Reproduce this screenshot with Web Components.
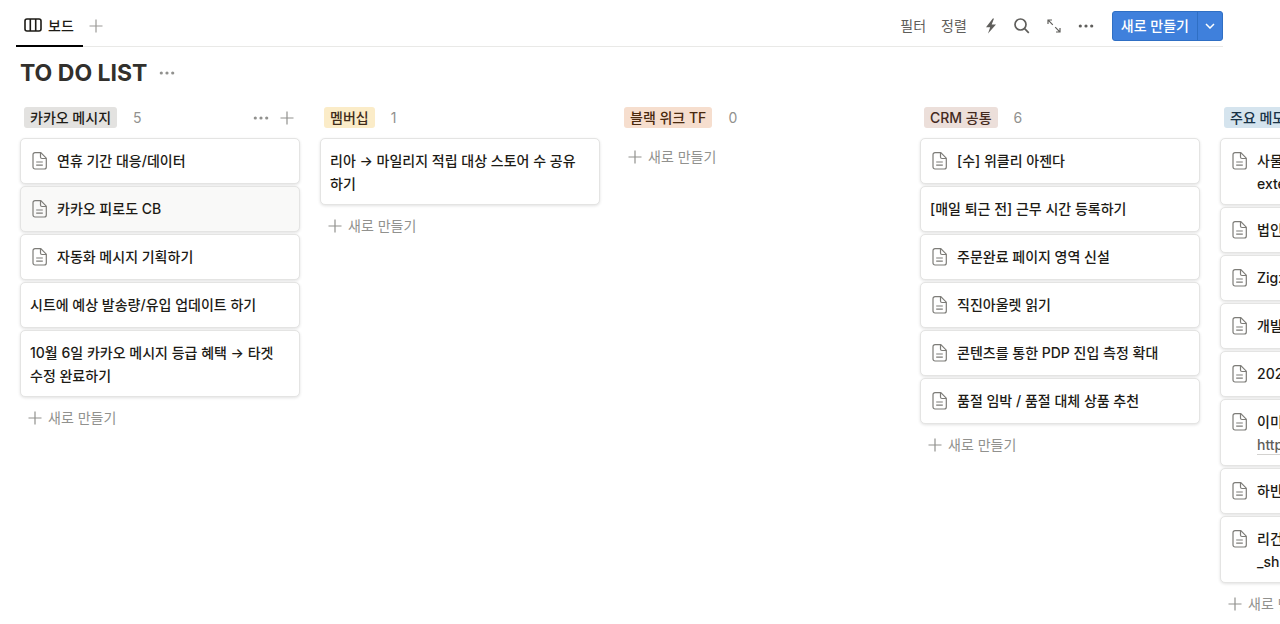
<!DOCTYPE html>
<html lang="ko">
<head>
<meta charset="utf-8">
<meta name="viewport" content="width=device-width, initial-scale=1">
<title>TO DO LIST</title>
<style>
    body{
        margin: 0;
        background: #fff;
        color: #1d1b16;
        font: 14px/23px Inter, "Noto Sans CJK KR", sans-serif;
        overflow-x: hidden;
    }
</style>
</head>
<body>

<todo-board>
    <board-toolbar slot="toolbar"></board-toolbar>
    <board-title slot="title">TO DO LIST</board-title>

    <board-column count="5" color="#e3e2e0" actions>
        <span slot="label">카카오 메시지</span>
        <board-card page>연휴 기간 대응/데이터</board-card>
        <board-card page active>카카오 피로도 CB</board-card>
        <board-card page>자동화 메시지 기획하기</board-card>
        <board-card>시트에 예상 발송량/유입 업데이트 하기</board-card>
        <board-card>10월 6일 카카오 메시지 등급 혜택 → 타겟 수정 완료하기</board-card>
    </board-column>

    <board-column count="1" color="#fbecc8" ink="#402c1b">
        <span slot="label">멤버십</span>
        <board-card>리아 → 마일리지 적립 대상 스토어 수 공유<br>하기</board-card>
    </board-column>

    <board-column count="0" color="#f6dece" ink="#49290e">
        <span slot="label">블랙 위크 TF</span>
    </board-column>

    <board-column count="6" color="#ecdfda" ink="#442a1e">
        <span slot="label">CRM 공통</span>
        <board-card page>[수] 위클리 아젠다</board-card>
        <board-card>[매일 퇴근 전] 근무 시간 등록하기</board-card>
        <board-card page>주문완료 페이지 영역 신설</board-card>
        <board-card page>직진아울렛 읽기</board-card>
        <board-card page>콘텐츠를 통한 PDP 진입 측정 확대</board-card>
        <board-card page>품절 임박 / 품절 대체 상품 추천</board-card>
    </board-column>

    <board-column color="#d5e4ee" ink="#183347">
        <span slot="label">주요 메모</span>
        <board-card page>사물<br>exte</board-card>
        <board-card page>법인</board-card>
        <board-card page>Zigz</board-card>
        <board-card page>개발</board-card>
        <board-card page>202</board-card>
        <board-card page>이미<br><a href="#">http</a></board-card>
        <board-card page>하반</board-card>
        <board-card page>리건<br>_sh</board-card>
    </board-column>
</todo-board>

<script>
const icons = {
    board: '<rect x="1" y="2" width="16" height="12" rx="2"/><path d="M6.3 2v12M11.7 2v12"/>',
    plus: '<path d="M7 .5v13M.5 7h13"/>',
    dots: '<g fill="currentColor" stroke="none"><circle cx="2.3" cy="3" r="1.6"/><circle cx="8" cy="3" r="1.6"/><circle cx="13.7" cy="3" r="1.6"/></g>',
    page: '<path d="M3 .7h5.8L14.3 6.2V15a2 2 0 0 1-2 2H3a2 2 0 0 1-2-2V2.7a2 2 0 0 1 2-2z"/><path d="M8.5 .9V5A1.5 1.5 0 0 0 10 6.500h4M4.200 10h6.600M4.200 13.200h6.600"/>',
    bolt: '<path d="M7.800 .5 1 9.300h4.200L3 15.500l8-9H6.700L9 .5z" fill="currentColor" stroke="none"/>',
    search: '<circle cx="6.500" cy="6.500" r="5.500"/><path d="m10.600 10.600 4.200 4.200"/>',
    expand: '<path d="M5 1H1v4M1.200 1.200l4.600 4.600M8.200 8.200l4.600 4.600M13 9v4H9"/>',
    chevron: '<path d="m1 1 4 4 4-4"/>'
};

const sizes = {
    board: [18, 16], plus: [14, 14], dots: [16, 6], page: [15, 18],
    bolt: [12, 16], search: [16, 16], expand: [14, 14], chevron: [10, 6]
};

class BoardIcon extends HTMLElement{
    constructor() {
        super();
        this.attachShadow({mode: 'open'});
    }

    connectedCallback() {
        const name = this.getAttribute('name');
        const [w, h] = sizes[name];
        const stroke = this.getAttribute('stroke') || 1.2;

        this.shadowRoot.innerHTML = `
            <style>
                :host{ display: inline-flex; flex: none; }
                svg{ display: block; }
            </style>
            <svg width="${w}" height="${h}" viewBox="0 0 ${w} ${h}" fill="none"
                stroke="currentColor" stroke-width="${stroke}" aria-hidden="true">${icons[name]}</svg>
        `;
    }
}
customElements.define('board-icon', BoardIcon);


const toolbarTemplate = document.createElement('template');
toolbarTemplate.innerHTML = `
<style>
    :host{
        display: flex;
        justify-content: space-between;
        height: 46px;
        margin: 0 57px 0 16px;
        border-bottom: 1px solid #e9e9e7;
    }
    button{
        display: flex;
        align-items: center;
        border: 0;
        padding: 0;
        background: none;
        color: inherit;
        font: inherit;
        cursor: pointer;
    }
    nav, .tools, .create{
        display: flex;
        align-items: center;
    }
    nav{
        gap: 6px;
        padding-top: 5px;
    }
    .tab{
        align-self: stretch;
        gap: 6px;
        padding: 0 9px 0 8px;
        margin-bottom: -1px;
        border-bottom: 2px solid #000;
        font-weight: 500;
    }
    .add{
        color: #9b9a97;
    }
    .tools{
        gap: 15px;
        padding-top: 5px;
        color: #5f5e5b;
    }
    .icons{
        display: flex;
        align-items: center;
        gap: 17px;
        padding: 0 3px;
    }
    .create{
        height: 28px;
        border: 1px solid #2f6fc4;
        border-radius: 3px;
        background: #3f80dc;
        color: #fff;
        font-weight: 500;
    }
    .create button{
        height: 28px;
        padding: 0 8px;
    }
    .create button + button{
        padding: 0 7px;
        border-left: 1px solid #2f6fc4;
    }
</style>
<nav>
    <button class="tab"><board-icon name="board" stroke="1.6"></board-icon>보드</button>
    <button class="add" aria-label="보기 추가"><board-icon name="plus"></board-icon></button>
</nav>
<div class="tools">
    <button>필터</button>
    <button>정렬</button>
    <div class="icons">
        <button aria-label="자동화"><board-icon name="bolt"></board-icon></button>
        <button aria-label="검색"><board-icon name="search" stroke="1.7"></board-icon></button>
        <button aria-label="확장"><board-icon name="expand"></board-icon></button>
        <button aria-label="더 보기"><board-icon name="dots"></board-icon></button>
    </div>
    <div class="create">
        <button>새로 만들기</button>
        <button aria-label="템플릿"><board-icon name="chevron" stroke="1.5"></board-icon></button>
    </div>
</div>
`;

class BoardToolbar extends HTMLElement{
    constructor() {
        super();
        this.attachShadow({mode: 'open'});
        this.shadowRoot.appendChild(toolbarTemplate.content.cloneNode(true));
    }
}
customElements.define('board-toolbar', BoardToolbar);


const titleTemplate = document.createElement('template');
titleTemplate.innerHTML = `
<style>
    :host{
        display: flex;
        align-items: center;
        gap: 12px;
        height: 48px;
        padding: 2px 20px 0;
    }
    h1{
        margin: 0;
        color: #32302c;
        font-size: 23px;
        font-weight: 700;
        line-height: 30px;
    }
    button{
        display: flex;
        border: 0;
        padding: 0;
        background: none;
        color: #91918e;
        cursor: pointer;
    }
</style>
<h1><slot></slot></h1>
<button aria-label="더 보기"><board-icon name="dots"></board-icon></button>
`;

class BoardTitle extends HTMLElement{
    constructor() {
        super();
        this.attachShadow({mode: 'open'});
        this.shadowRoot.appendChild(titleTemplate.content.cloneNode(true));
    }
}
customElements.define('board-title', BoardTitle);


const cardTemplate = document.createElement('template');
cardTemplate.innerHTML = `
<style>
    :host{
        display: flex;
        gap: 10px;
        box-sizing: border-box;
        min-height: 46px;
        padding: 10px 9px 9px;
        border: 1px solid #e4e4e3;
        border-radius: 5px;
        background: #fff;
        box-shadow: 0 1px 3px rgba(15, 15, 15, .12);
        font-weight: 500;
        word-break: keep-all;
        cursor: pointer;
    }
    :host([active]){
        background: #f9f9f8;
    }
    board-icon{
        display: none;
        padding: 3px 0 0 2px;
        height: 18px;
        color: #7d7c78;
    }
    :host([page]) board-icon{
        display: flex;
    }
    ::slotted(a){
        color: #5f5e5b;
        text-decoration-color: #d3d2d0;
        text-underline-offset: 4px;
    }
</style>
<board-icon name="page"></board-icon>
<div><slot></slot></div>
`;

class BoardCard extends HTMLElement{
    constructor() {
        super();
        this.attachShadow({mode: 'open'});
        this.shadowRoot.appendChild(cardTemplate.content.cloneNode(true));
    }
}
customElements.define('board-card', BoardCard);


const columnTemplate = document.createElement('template');
columnTemplate.innerHTML = `
<style>
    :host{
        display: block;
        flex: 0 0 280px;
    }
    header{
        display: flex;
        align-items: center;
        height: 41px;
        padding: 0 6px 0 4px;
    }
    .label{
        padding: 0 6px;
        border-radius: 3px;
        font-weight: 500;
        line-height: 21px;
    }
    .count{
        flex: 1;
        padding-left: 16px;
        color: #91918e;
    }
    .actions{
        display: none;
        align-items: center;
        gap: 11px;
        color: #91918e;
    }
    :host([actions]) .actions{
        display: flex;
    }
    .cards{
        display: flex;
        flex-direction: column;
        gap: 2px;
    }
    button{
        display: flex;
        align-items: center;
        gap: 6px;
        border: 0;
        padding: 0;
        background: none;
        color: #91918e;
        font: inherit;
        cursor: pointer;
    }
    .new{
        height: 37px;
        padding: 0 8px;
    }
</style>
<header>
    <span class="label"><slot name="label"></slot></span>
    <span class="count"></span>
    <span class="actions">
        <button aria-label="더 보기"><board-icon name="dots"></board-icon></button>
        <button aria-label="추가"><board-icon name="plus"></board-icon></button>
    </span>
</header>
<div class="cards">
    <slot></slot>
    <button class="new"><board-icon name="plus"></board-icon>새로 만들기</button>
</div>
`;

class BoardColumn extends HTMLElement{
    constructor() {
        super();
        this.attachShadow({mode: 'open'});
        this.shadowRoot.appendChild(columnTemplate.content.cloneNode(true));
    }

    connectedCallback() {
        const label = this.shadowRoot.querySelector('.label');

        label.style.backgroundColor = this.getAttribute('color');
        label.style.color = this.getAttribute('ink') || '';
        this.shadowRoot.querySelector('.count').textContent = this.getAttribute('count') || '';
    }
}
customElements.define('board-column', BoardColumn);


const boardTemplate = document.createElement('template');
boardTemplate.innerHTML = `
<style>
    :host{
        display: block;
    }
    main{
        display: flex;
        align-items: flex-start;
        gap: 20px;
        padding: 0 20px;
        overflow: hidden;
    }
</style>
<slot name="toolbar"></slot>
<slot name="title"></slot>
<main><slot></slot></main>
`;

class TodoBoard extends HTMLElement{
    constructor() {
        super();
        this.attachShadow({mode: 'open'});
        this.shadowRoot.appendChild(boardTemplate.content.cloneNode(true));
    }
}
customElements.define('todo-board', TodoBoard);
</script>
</body>
</html>
